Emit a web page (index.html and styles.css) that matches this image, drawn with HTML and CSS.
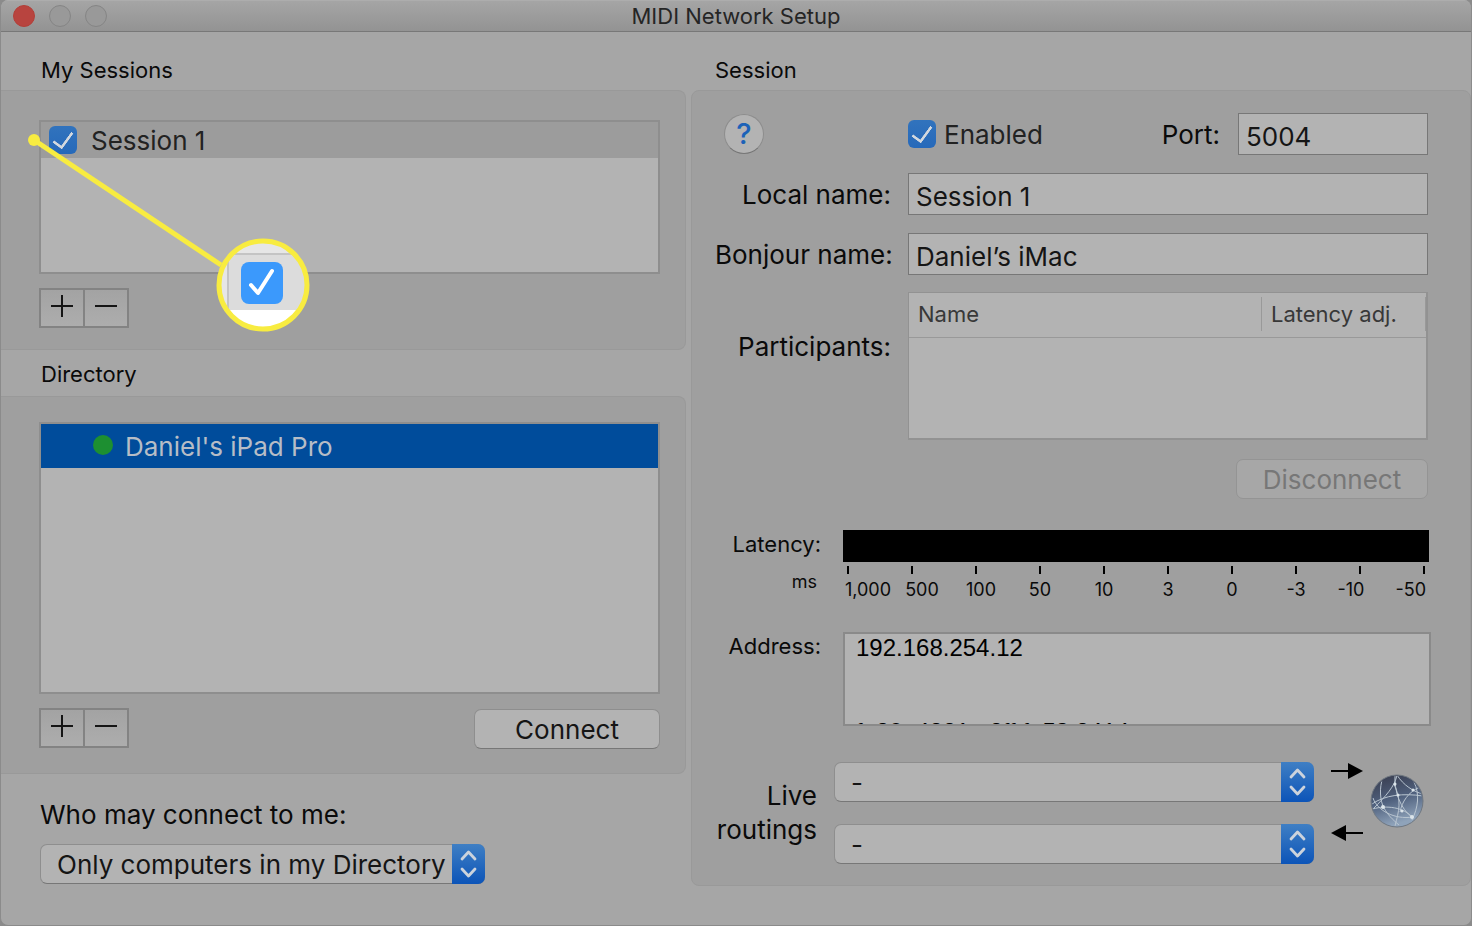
FILE: index.html
```html
<!DOCTYPE html>
<html lang="en">
<head>
<meta charset="utf-8">
<title>MIDI Network Setup</title>
<link rel="stylesheet" href="styles.css">
</head>
<body>
<svg class="defs" width="0" height="0" aria-hidden="true">
  <symbol id="chevrons" viewBox="0 0 33 40"><path d="M10 15l6.500-7 6.500 7M10 25l6.500 7 6.500-7" fill="none" stroke="currentColor" stroke-width="2.800" stroke-linecap="round" stroke-linejoin="round"/></symbol>
</svg>
<div class="window">
  <header class="titlebar">
    <div class="lights">
      <button class="light close" aria-label="Close"></button>
      <button class="light" aria-label="Minimize"></button>
      <button class="light" aria-label="Zoom"></button>
    </div>
    <h1 class="title">MIDI Network Setup</h1>
  </header>
  <main class="columns">
    <div class="column">
      <h2 class="heading">My Sessions</h2>
      <section class="panel panel-left sessions">
        <div class="list session-list">
          <label class="session-row"><input class="check" type="checkbox" checked>Session 1</label>
        </div>
        <div class="actions">
          <div class="pair">
            <button class="square" aria-label="Add session"><svg width="24" height="24" viewBox="0 0 24 24"><path d="M1 12h22M12 1v22"/></svg></button>
            <button class="square" aria-label="Remove session"><svg width="24" height="24" viewBox="0 0 24 24"><path d="M1 12h22"/></svg></button>
          </div>
        </div>
      </section>
      <h2 class="heading heading-short">Directory</h2>
      <section class="panel panel-left directory">
        <div class="list directory-list">
          <div class="directory-row"><span class="dot"></span>Daniel's iPad Pro</div>
        </div>
        <div class="actions">
          <div class="pair">
            <button class="square" aria-label="Add device"><svg width="24" height="24" viewBox="0 0 24 24"><path d="M1 12h22M12 1v22"/></svg></button>
            <button class="square" aria-label="Remove device"><svg width="24" height="24" viewBox="0 0 24 24"><path d="M1 12h22"/></svg></button>
          </div>
          <button class="push connect">Connect</button>
        </div>
      </section>
      <div class="access">
        <label for="who">Who may connect to me:</label>
        <div class="popup popup-who">
          <select id="who"><option>Only computers in my Directory</option></select>
          <span class="stepper"><svg width="33" height="40"><use href="#chevrons"/></svg></span>
        </div>
      </div>
    </div>
    <div class="column">
      <h2 class="heading heading-right">Session</h2>
      <section class="panel panel-right">
        <div class="form">
          <div class="help-cell"><button class="help" aria-label="Help">?</button></div>
          <div class="enabled-row">
            <label class="enabled"><input class="check" type="checkbox" checked>Enabled</label>
            <label class="port" for="port">Port:</label>
            <input class="field port-field" id="port" type="text" value="5004">
          </div>
          <label for="local">Local name:</label>
          <input class="field" id="local" type="text" value="Session 1">
          <label for="bonjour">Bonjour name:</label>
          <input class="field" id="bonjour" type="text" value="Daniel’s iMac">
          <span class="participants-label" id="participants">Participants:</span>
          <div class="participants">
            <table aria-labelledby="participants">
              <thead><tr><th>Name</th><th class="adj"><span>Latency adj.</span></th></tr></thead>
            </table>
          </div>
        </div>
        <div class="disconnect-row"><button class="push disconnect" disabled>Disconnect</button></div>
        <div class="details">
          <div class="small-labels"><span>Latency:</span><span class="ms">ms</span></div>
          <div class="latency">
            <div class="meter"></div>
            <div class="ticks"><i></i><i></i><i></i><i></i><i></i><i></i><i></i><i></i><i></i><i></i></div>
            <div class="scale"><span>1,000</span><span>500</span><span>100</span><span>50</span><span>10</span><span>3</span><span>0</span><span>-3</span><span>-10</span><span>-50</span></div>
          </div>
          <label class="address-label" for="address">Address:</label>
          <textarea class="address" id="address" readonly>192.168.254.12


fe80::4821:e2ff:fe53:2414</textarea>
        </div>
        <div class="routings">
          <span class="routings-label">Live<br>routings</span>
          <div class="routing-selects">
            <div class="popup"><select aria-label="Live routing to network"><option>-</option></select><span class="stepper"><svg width="33" height="40"><use href="#chevrons"/></svg></span></div>
            <div class="popup"><select aria-label="Live routing from network"><option>-</option></select><span class="stepper"><svg width="33" height="40"><use href="#chevrons"/></svg></span></div>
          </div>
          <svg class="arrows" width="32" height="80" viewBox="0 0 32 80"><path d="M0 8h20v2H0zM17 1l15 8-15 8zM32 70H12v2h20zM15 63L0 71l15 8z"/></svg>
          <svg class="globe" width="54" height="54" viewBox="0 0 54 54">
            <defs>
              <linearGradient id="sea" x1="0" y1="0" x2="0.300" y2="1"><stop offset="0" stop-color="#36394a"/><stop offset="0.550" stop-color="#50617e"/><stop offset="1" stop-color="#8fa3ba"/></linearGradient>
              <clipPath id="disc"><circle cx="27" cy="27" r="25"/></clipPath>
            </defs>
            <circle cx="27" cy="27" r="26" fill="url(#sea)" stroke="#6f7780"/>
            <g clip-path="url(#disc)" fill="none" stroke="#b9c5d0" stroke-width="1">
              <path d="M13 3C9 14 10 27 14 34s8 11 15 17"/><path d="M2 30C15 21 33 19 53 22"/><path d="M27 1C25 12 16 22 3 35"/><path d="M25 0C24 17 30 35 43 44"/><path d="M27 1C33 11 44 18 53 20"/><path d="M3 35C16 31 34 33 43 44"/><path d="M30 38C32 28 38 18 50 13"/><path d="M44 8C50 20 48 34 42 46"/><path d="M25 52C29 36 32 28 24 10"/><path d="M3 24C7 36 24 46 43 43"/>
            </g>
            <g fill="#dbe4ea"><circle cx="13" cy="33" r="2"/><circle cx="32" cy="37" r="1.500"/><circle cx="42" cy="43" r="2"/><circle cx="43" cy="16" r="1.500"/><circle cx="25" cy="10" r="1.500"/><circle cx="28" cy="21" r="1.500"/></g>
          </svg>
        </div>
      </section>
    </div>
  </main>
  <svg class="callout" width="290" height="212" viewBox="0 0 290 212" aria-hidden="true">
    <defs><clipPath id="lens"><circle cx="243" cy="165" r="45"/></clipPath></defs>
    <g clip-path="url(#lens)">
      <path fill="#e6e6e6" d="M196 118h94v94h-94z"/><path fill="#dcdcdc" d="M208 134h82v56h-82z"/><path fill="#fff" d="M208 190h82v22h-82z"/>
      <path d="M290 134h-82v78" fill="none" stroke="#c4c4c4" stroke-width="2"/>
      <rect x="221" y="142" width="42" height="42" rx="8" fill="#3b99fc"/>
      <path d="M231 165l7 8 14-22" fill="none" stroke="#fff" stroke-width="4" stroke-linecap="round" stroke-linejoin="round"/>
    </g>
    <circle cx="243" cy="165" r="44" fill="none" stroke="#f8ec40" stroke-width="5"/>
    <path d="M14 20l187 125" stroke="#f8ec40" stroke-width="5"/><circle cx="14" cy="20" r="6" fill="#f8ec40"/>
  </svg>
</div>
</body>
</html>
```
FILE: styles.css
```css
* { box-sizing: border-box; }
body { margin: 0; background: #8b8b8b; font-family: Inter, "Liberation Sans", sans-serif; font-size: 26px; color: #0a0a0a; }
button, input, select, textarea { font: inherit; color: #151515; margin: 0; }
.defs { position: absolute; }
.window { position: relative; min-height: 100vh; background: #a6a6a6; border: 1px solid #8b8b8b; border-top: 0; border-radius: 8px; overflow: hidden; }
.titlebar { display: grid; grid-template-columns: 1fr auto 1fr; align-items: center; height: 32px; background: linear-gradient(#a5a5a5, #939393); border-bottom: 1px solid #787878; border-top: 1px solid #adadad; }
.lights { display: flex; gap: 14px; padding-left: 12px; }
.light { width: 22px; height: 22px; padding: 0; border: 1px solid #858585; border-radius: 50%; background: #999; }
.close { background: #b8443f; border-color: #b23f39; }
.title { margin: 0; font-size: 22px; font-weight: 400; line-height: 30px; color: #252525; }
.callout { position: absolute; left: 19px; top: 120px; pointer-events: none; }

.columns { display: grid; grid-template-columns: 685fr 780fr; gap: 5px; }
.column { min-width: 0; }
.heading { margin: 0; padding: 18px 0 0 40px; height: 58px; font-size: 22px; line-height: 40px; font-weight: 400; }
.heading-short { height: 46px; padding-top: 4px; }
.heading-right { padding-left: 24px; }
.panel { background: #9f9f9f; border: 1px solid #999; }
.panel-left { border-left: 0; border-radius: 0 8px 8px 0; padding: 29px 25px 0 38px; }
.sessions { height: 260px; }
.directory { height: 378px; padding-top: 25px; }
.list { background: #b3b3b3; border: 2px solid #8e8e8e; }
.session-list { height: 154px; }
.session-row { display: flex; align-items: center; gap: 14px; height: 36px; padding-left: 8px; background: #9c9c9c; color: #222; }
.check { appearance: none; width: 28px; height: 28px; flex: none; border-radius: 6px; display: grid; place-items: center; background: linear-gradient(#3173bd, #2669ba); }
.check:checked::after { content: ""; width: 9px; height: 17px; border: solid #d2d8df; border-width: 0 3px 3px 0; border-radius: 1px; transform: translateY(-2px) rotate(36deg); }
.directory-list { height: 272px; }
.directory-row { display: flex; align-items: center; gap: 12px; height: 44px; padding-left: 52px; background: #004c9b; color: #b7bdc6; }
.dot { width: 20px; height: 20px; margin-bottom: 2px; border-radius: 50%; background: #1d8f31; }
.actions { display: flex; justify-content: space-between; align-items: flex-start; padding-top: 14px; }
.pair { display: flex; }
.square { width: 46px; height: 40px; padding: 0 0 4px; display: grid; place-items: center; background: linear-gradient(#a3a3a3, #adadad); border: 2px solid #838383; }
.square + .square { margin-left: -2px; }
.square path { stroke: #151515; stroke-width: 2; }
.push { height: 40px; margin-top: 1px; padding: 0; background: #b3b3b3; border: 1px solid #8e8e8e; border-bottom-color: #777; border-radius: 7px; }
.connect { width: 186px; }
.access { display: flex; flex-direction: column; align-items: flex-start; padding: 22px 0 0 39px; }
.access label { line-height: 38px; }
.popup { position: relative; height: 40px; }
.popup-who { width: 445px; margin-top: 10px; }
.popup select { appearance: none; width: 100%; height: 40px; padding: 0 33px 0 16px; background: #b3b3b3; border: 1px solid #8e8e8e; border-bottom-color: #777; border-radius: 7px; }
.stepper { position: absolute; top: 0; right: 0; width: 33px; height: 40px; border-radius: 0 7px 7px 0; background: linear-gradient(#3f7fc4, #0c54b8); color: #ccd3dc; pointer-events: none; }
.stepper svg { display: block; }

.panel-right { height: 796px; border-radius: 8px; padding: 22px 42px 0 23px; }
.form { display: grid; grid-template-columns: 176px 1fr; column-gap: 17px; row-gap: 18px; align-items: center; }
.form > label, .participants-label { text-align: right; white-space: nowrap; }
.help-cell { padding-left: 9px; }
.help { display: block; width: 40px; height: 40px; padding: 0; border: 1px solid #8d8d8d; border-bottom-color: #777; border-radius: 50%; background: #b3b3b3; color: #1c62b8; font-size: 29px; font-weight: 500; line-height: 36px; }
.enabled-row { display: flex; align-items: center; }
.enabled { display: flex; align-items: center; gap: 8px; color: #222; }
.port { margin-left: auto; padding-right: 18px; }
.field { width: 100%; height: 42px; padding: 4px 7px 0; background: #b3b3b3; border: 1px solid #777; border-radius: 0; }
.port-field { width: 190px; }
.participants-label { padding-bottom: 40px; }
.participants { height: 148px; margin-top: -1px; background: #b3b3b3; border: 2px solid #929292; border-width: 1px 2px 2px 1px; }
.participants table { width: 100%; border-collapse: collapse; }
.participants th { height: 44px; padding: 0 9px 2px; text-align: left; font-size: 22px; font-weight: 400; color: #383838; border-bottom: 1px solid #999; }
.participants .adj { width: 165px; padding: 0 0 2px; }
.adj span { display: block; line-height: 34px; padding-left: 9px; border: solid #999; border-width: 0 1px; }
.disconnect-row { display: flex; justify-content: flex-end; padding-top: 18px; }
.disconnect { width: 192px; background: #a7a7a7; color: #777; border-color: #949494; }
.details { display: grid; grid-template-columns: 106px 1fr; column-gap: 22px; row-gap: 30px; margin: 31px -1px 0 0; font-size: 22px; }
.small-labels { display: flex; flex-direction: column; align-items: flex-end; line-height: 28px; }
.ms { font-size: 18px; padding: 10px 4px 0 0; }
.meter { height: 32px; background: #000; }
.ticks { display: flex; justify-content: space-between; padding: 4px 4px 0; }
.ticks i { width: 2px; height: 8px; background: #000; }
.scale { display: grid; grid-template-columns: 50fr 58fr 60fr 58fr 70fr 58fr 70fr 58fr 52fr 49fr; padding: 4px 3px 0 0; font-size: 18px; line-height: 24px; text-align: center; white-space: nowrap; }
.scale span:last-child { text-align: right; }
.address-label { text-align: right; line-height: 28px; }
.address { display: block; width: calc(100% + 2px); height: 94px; padding: 0 11px; resize: none; overflow: hidden; background: #b3b3b3; border: 2px solid #8a8a8a; font: 24px/28px "Liberation Sans", sans-serif; color: #000; }
.routings { display: grid; grid-template-columns: 102px 1fr 32px 54px; align-items: center; column-gap: 17px; padding-top: 36px; margin-right: -6px; }
.routings-label { text-align: right; line-height: 34px; }
.routing-selects { display: grid; gap: 22px; }
.arrows, .globe { align-self: start; }
.globe { margin: 12px 0 0 -10px; }
```
